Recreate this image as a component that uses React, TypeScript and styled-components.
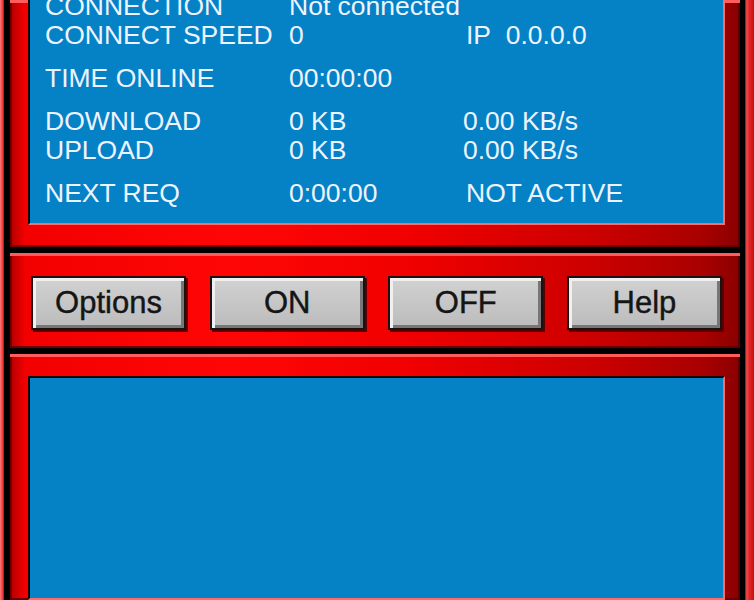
import React from "react";
import styled, { createGlobalStyle } from "styled-components";

const Global = createGlobalStyle`
  html, body { margin: 0; padding: 0; background: #000; overflow: hidden; }
  #root { width: 754px; height: 600px; }
`;

const Frame = styled.div`
  display: flex;
  width: 754px;
  height: 600px;
  background: #000;
  overflow: hidden;
`;

const LeftRail = styled.div`
  width: 4px;
  flex: none;
  background: linear-gradient(90deg, #ff7a7a 0%, #f04040 60%, #b01010 100%);
`;

const RightRail = styled.div`
  width: 9px;
  flex: none;
  background: linear-gradient(90deg, #a00000 0%, #f05050 20%, #e02828 45%, #c81010 100%);
`;

const Column = styled.div`
  flex: 1;
  display: flex;
  flex-direction: column;
  gap: 6px;
  padding: 0 5px 0 6px;
  min-width: 0;
`;

const Panel = styled.div<{ $h?: number; $pad: string; $grow?: boolean }>`
  flex: ${(p) => (p.$grow ? "1" : "none")};
  height: ${(p) => (p.$h ? `${p.$h}px` : "auto")};
  box-sizing: border-box;
  padding: ${(p) => p.$pad};
  display: flex;
  flex-direction: column;
  background: linear-gradient(
    90deg,
    #b00000 0%,
    #f20000 2%,
    #ff0606 30%,
    #f00000 55%,
    #cc0000 80%,
    #a80000 95%,
    #8a0000 100%
  );
  box-shadow: inset 0 3px 0 #ff5c5c, inset 2px 0 0 #700000,
    inset -2px 0 0 #5a0000, inset 0 -2px 0 #6a0000;
`;

const Screen = styled.div<{ $top?: boolean }>`
  flex: 1;
  background: #0581c6;
  box-sizing: border-box;
  overflow: hidden;
  border-left: 2px solid #160000;
  border-top: ${(p) => (p.$top ? "2px solid #160000" : "none")};
  border-right: 2px solid #ff6a6a;
  border-bottom: 2px solid #ff6a6a;
  padding: 0 0 0 15px;
  display: flex;
  flex-direction: column;
  gap: 14px;
`;

const Group = styled.div<{ $first?: boolean }>`
  display: grid;
  grid-template-columns: 244px 174px 1fr;
  margin-top: ${(p) => (p.$first ? "-8px" : "0")};
  font-family: "Liberation Sans", Arial, sans-serif;
  font-size: 26.5px;
  line-height: 29px;
  color: #eef4ff;
  white-space: nowrap;
`;

const Cell = styled.span<{ $shift?: boolean }>`
  padding-left: ${(p) => (p.$shift ? "3px" : "0")};
`;

const ButtonRow = styled.div`
  display: flex;
  justify-content: space-between;
  align-items: center;
  height: 54px;
`;

const Button = styled.button`
  width: 155px;
  height: 54px;
  box-sizing: border-box;
  border: 2px solid #1c1010;
  background: linear-gradient(180deg, #d2d2d2 0%, #c6c6c6 50%, #bcbcbc 100%);
  box-shadow: inset 3px 3px 0 #f0f0f0, inset -3px -3px 0 #777,
    2px 2px 0 #5a0000;
  font-family: "Liberation Sans", Arial, sans-serif;
  font-size: 31px;
  color: #151515;
  padding: 0;
  cursor: pointer;
  -webkit-text-stroke: 0.4px #151515;
`;

const rows: { first?: boolean; cells: [string, string, string][] }[] = [
  {
    first: true,
    cells: [
      ["CONNECTION", "Not connected", ""],
      ["CONNECT SPEED", "0", "IP  0.0.0.0"],
    ],
  },
  { cells: [["TIME ONLINE", "00:00:00", ""]] },
  {
    cells: [
      ["DOWNLOAD", "0 KB", "0.00 KB/s"],
      ["UPLOAD", "0 KB", "0.00 KB/s"],
    ],
  },
  { cells: [["NEXT REQ", "0:00:00", "NOT ACTIVE"]] },
];

export default function App() {
  return (
    <>
      <Global />
      <Frame>
        <LeftRail />
        <Column>
          <Panel $h={247} $pad="0 15px 22px 18px">
            <Screen>
              {rows.map((g, i) => (
                <Group key={i} $first={g.first}>
                  {g.cells.map(([a, b, c], j) => (
                    <React.Fragment key={j}>
                      <Cell>{a}</Cell>
                      <Cell>{b}</Cell>
                      <Cell $shift={!c.startsWith("0.00")}>
                        {c.replace("  ", "\u00a0\u00a0")}
                      </Cell>
                    </React.Fragment>
                  ))}
                </Group>
              ))}
            </Screen>
          </Panel>
          <Panel $h={95} $pad="23px 18px 18px 21px">
            <ButtonRow>
              <Button>Options</Button>
              <Button>ON</Button>
              <Button>OFF</Button>
              <Button>Help</Button>
            </ButtonRow>
          </Panel>
          <Panel $grow $pad="22px 15px 0 18px">
            <Screen $top />
          </Panel>
        </Column>
        <RightRail />
      </Frame>
    </>
  );
}
